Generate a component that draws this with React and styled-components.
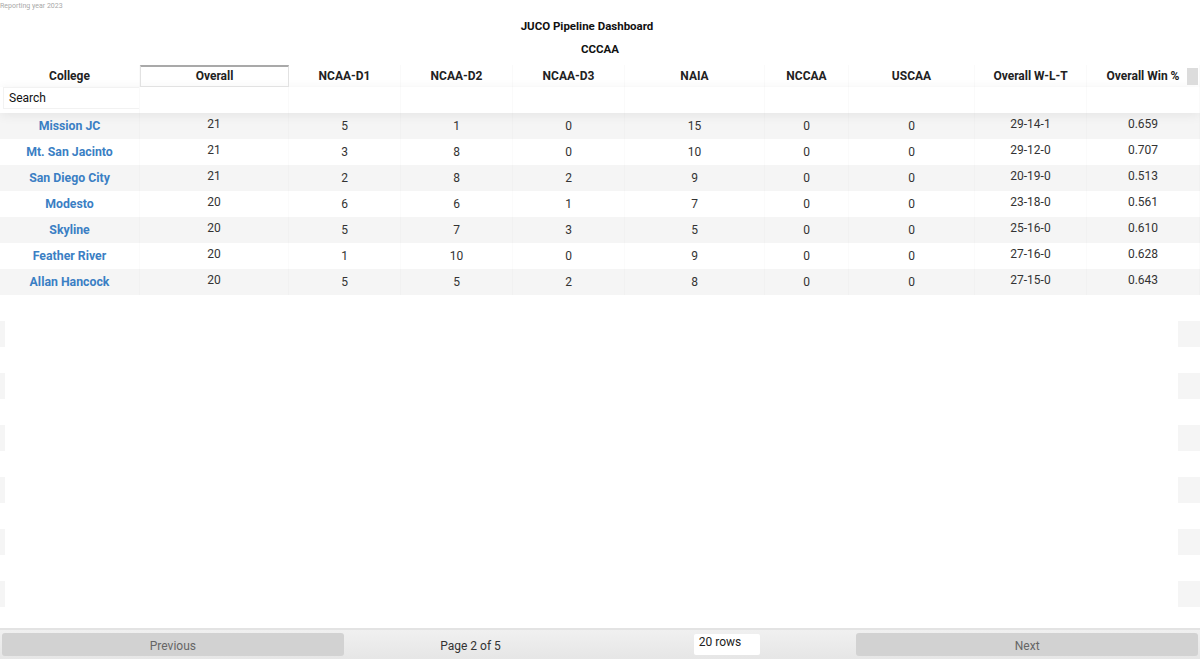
import React from "react";
import styled, { createGlobalStyle } from "styled-components";

const Global = createGlobalStyle`
  html, body { margin: 0; padding: 0; background: #fff; }
  body { font-family: Roboto, "Liberation Sans", Arial, sans-serif; color: #333; }
  * { box-sizing: border-box; }
`;

const Page = styled.div`
  height: 659px;
  display: flex;
  flex-direction: column;
  overflow: hidden;
`;

const Reporting = styled.div`
  font-size: 7px;
  color: #a8a8a8;
  height: 12px;
  line-height: 13px;
`;

const Title = styled.h1`
  margin: 0;
  font-size: 11.5px;
  font-weight: 700;
  color: #111;
  text-align: center;
  padding-right: 26px;
  height: 23px;
  line-height: 29px;
`;

const Subtitle = styled.h2`
  margin: 0;
  font-size: 11.5px;
  font-weight: 700;
  color: #111;
  text-align: center;
  height: 30px;
  line-height: 29px;
`;

const Table = styled.div`
  flex: 1;
  display: flex;
  flex-direction: column;
  min-height: 0;
`;

const cols = [140, 149, 112, 112, 112, 140, 84, 126, 112, 113];

const HeadRow = styled.div`
  display: flex;
  height: 22px;
  position: relative;
  z-index: 2;
`;

const HeadCell = styled.div`
  flex: 0 0 ${(p) => p.$w}px;
  font-size: 12px;
  font-weight: 700;
  color: #222;
  text-align: center;
  line-height: 22px;
  border-right: 1px solid rgba(0, 0, 0, 0.02);
  ${(p) =>
    p.$sorted &&
    `border: 1px solid #e2e2e2; border-top: 2px solid #a9a9a9; line-height: 19px;`}
`;

const ScrollNub = styled.div`
  position: absolute;
  right: 2px;
  top: 3px;
  width: 11px;
  height: 17px;
  background: #dcdcdc;
`;

const FilterRow = styled.div`
  display: flex;
  height: 26px;
  box-shadow: 0 2px 12px 0 rgba(0, 0, 0, 0.07);
  position: relative;
  z-index: 1;
`;

const FilterCell = styled.div`
  flex: 0 0 ${(p) => p.$w}px;
  border-right: 1px solid rgba(0, 0, 0, 0.02);
  padding: 0 0 4px 3px;
  display: flex;
`;

const SearchBox = styled.div`
  flex: 1;
  border: 1px solid rgba(0, 0, 0, 0.05);
  border-right: none;
  background: #fff;
  font-size: 12px;
  color: #111;
  padding-left: 5px;
  line-height: 20px;
`;

const Body = styled.div`
  flex: 1;
  overflow: hidden;
`;

const Row = styled.div`
  display: flex;
  height: 26px;
  background: ${(p) => (p.$striped ? "#f5f5f5" : "#fff")};
`;

const Cell = styled.div`
  flex: 0 0 ${(p) => p.$w}px;
  text-align: center;
  font-size: 12px;
  color: #333;
  line-height: ${(p) => (p.$high ? "23px" : "27px")};
  border-right: 1px solid rgba(0, 0, 0, 0.015);
`;

const CollegeLink = styled.a`
  color: #3b7fc4;
  font-weight: 700;
  font-size: 12.3px;
  text-decoration: none;
  line-height: 26px;
`;

const PadRow = styled.div`
  display: flex;
  justify-content: space-between;
  height: 26px;
`;

const PadEdge = styled.div`
  width: ${(p) => p.$w}px;
  background: ${(p) => (p.$striped ? "#f5f5f5" : "#fff")};
`;

const Pagination = styled.div`
  height: 31px;
  flex: 0 0 31px;
  display: flex;
  align-items: stretch;
  padding: 3px 2px;
  border-top: 2px solid #e3e3e3;
  background: linear-gradient(#f0f0f0, #e6e6e6);
`;

const PageButton = styled.button`
  flex: 1;
  border: none;
  border-radius: 3px;
  background: #d2d2d2;
  color: #666;
  font-family: Roboto, "Liberation Sans", Arial, sans-serif;
  font-size: 12px;
  padding: 3px 0 0;
  margin: 0;
`;

const Center = styled.div`
  flex: 1.5;
  display: flex;
  align-items: center;
  justify-content: space-around;
  font-size: 12px;
  color: #333;
`;

const PageInfo = styled.span`
  padding-top: 3px;
`;

const RowsSelect = styled.div`
  width: 66px;
  height: 21px;
  background: #fff;
  border-radius: 2px;
  font-size: 12px;
  color: #222;
  padding-left: 5px;
  line-height: 17px;
`;

const data = [
  ["Mission JC", 21, 5, 1, 0, 15, 0, 0, "29-14-1", "0.659"],
  ["Mt. San Jacinto", 21, 3, 8, 0, 10, 0, 0, "29-12-0", "0.707"],
  ["San Diego City", 21, 2, 8, 2, 9, 0, 0, "20-19-0", "0.513"],
  ["Modesto", 20, 6, 6, 1, 7, 0, 0, "23-18-0", "0.561"],
  ["Skyline", 20, 5, 7, 3, 5, 0, 0, "25-16-0", "0.610"],
  ["Feather River", 20, 1, 10, 0, 9, 0, 0, "27-16-0", "0.628"],
  ["Allan Hancock", 20, 5, 5, 2, 8, 0, 0, "27-15-0", "0.643"],
];

const headers = [
  "College",
  "Overall",
  "NCAA-D1",
  "NCAA-D2",
  "NCAA-D3",
  "NAIA",
  "NCCAA",
  "USCAA",
  "Overall W-L-T",
  "Overall Win %",
];

const highCols = new Set([1, 8, 9]);

export default function App() {
  const pads = Array.from({ length: 14 }, (_, i) => i);
  return (
    <Page>
      <Global />
      <Reporting>Reporting year 2023</Reporting>
      <Title>JUCO Pipeline Dashboard</Title>
      <Subtitle>CCCAA</Subtitle>
      <Table>
        <HeadRow>
          {headers.map((h, i) => (
            <HeadCell key={h} $w={cols[i]} $sorted={i === 1}>
              {h}
            </HeadCell>
          ))}
          <ScrollNub />
        </HeadRow>
        <FilterRow>
          {cols.map((w, i) => (
            <FilterCell key={i} $w={w}>
              {i === 0 && <SearchBox>Search</SearchBox>}
            </FilterCell>
          ))}
        </FilterRow>
        <Body>
          {data.map((r, ri) => (
            <Row key={r[0]} $striped={ri % 2 === 0}>
              {r.map((v, ci) => (
                <Cell key={ci} $w={cols[ci]} $high={highCols.has(ci)}>
                  {ci === 0 ? <CollegeLink href="#">{v}</CollegeLink> : v}
                </Cell>
              ))}
            </Row>
          ))}
          {pads.map((i) => {
            const striped = (data.length + i) % 2 === 0;
            return (
              <PadRow key={i}>
                <PadEdge $w={5} $striped={striped} />
                <PadEdge $w={22} $striped={striped} />
              </PadRow>
            );
          })}
        </Body>
      </Table>
      <Pagination>
        <PageButton>Previous</PageButton>
        <Center>
          <PageInfo>Page 2 of 5</PageInfo>
          <RowsSelect>20 rows</RowsSelect>
        </Center>
        <PageButton>Next</PageButton>
      </Pagination>
    </Page>
  );
}
